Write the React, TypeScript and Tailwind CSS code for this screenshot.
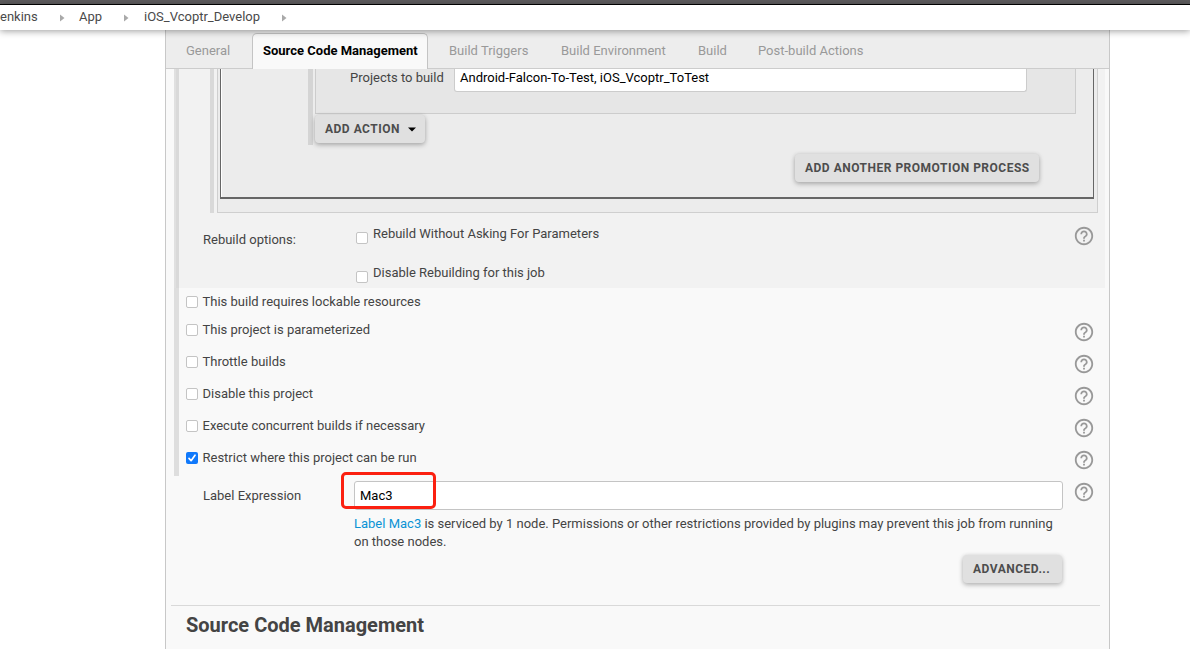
import type { ReactNode } from "react";
import { MdHelpOutline } from "react-icons/md";

function Help({ className = "" }: { className?: string }) {
  return <MdHelpOutline className={`size-[22px] shrink-0 text-[#999] ${className}`} />;
}

function Checkbox({ checked = false }: { checked?: boolean }) {
  return checked ? (
    <span className="flex size-3 shrink-0 items-center justify-center rounded-[2px] bg-[#1079fb]">
      <svg viewBox="0 0 12 12" className="size-3" fill="none" stroke="#fff" strokeWidth="1.7" strokeLinecap="round" strokeLinejoin="round">
        <path d="M3 6.4 5.1 8.7 9 3.2" />
      </svg>
    </span>
  ) : (
    <span className="size-3 shrink-0 rounded-[2px] border border-[#c4c4c4] bg-white" />
  );
}

function Button({ children, className }: { children: ReactNode; className: string }) {
  return (
    <button
      className={`flex h-7 shrink-0 items-center rounded-[4px] bg-[#e0e0e0] pl-[10px] text-[12px] font-bold tracking-[0.5px] whitespace-nowrap text-[#4d4d4d] shadow-[0_2px_5px_rgba(0,0,0,0.26),0_0_4px_rgba(0,0,0,0.08)] ${className}`}
    >
      {children}
    </button>
  );
}

function Crumb() {
  return (
    <svg viewBox="0 0 5 8" className="h-2 w-[5px] shrink-0" fill="#a9a9a9">
      <path d="M0 0.5 4.5 4 0 7.5z" />
    </svg>
  );
}

const options = [
  { label: "This project is parameterized" },
  { label: "Throttle builds" },
  { label: "Disable this project" },
  { label: "Execute concurrent builds if necessary" },
  { label: "Restrict where this project can be run", checked: true },
];

export default function App() {
  return (
    <div className="relative flex h-[649px] w-[1190px] flex-col overflow-hidden bg-white font-['Roboto',sans-serif] text-[13px] leading-[18px] whitespace-nowrap text-[#444]">
      <div className="h-[5px] shrink-0 border-b border-black bg-[#5d5b5d]" />
      <nav className="z-10 flex h-[25px] shrink-0 items-center bg-white text-[#4a4a4a] shadow-[0_1px_7px_rgba(0,0,0,0.4)]">
        <span className="w-[60px] pb-[2px]">enkins</span>
        <Crumb />
        <span className="ml-[14px] w-[45px] pb-[2px]">App</span>
        <Crumb />
        <span className="ml-[15px] w-[138px] pb-[2px]">iOS_Vcoptr_Develop</span>
        <Crumb />
      </nav>

      <main className="ml-[165px] flex w-[945px] grow flex-col border-x border-[#c8c8c8] bg-[#f9f9f9]">
        <div className="flex h-[39px] shrink-0 border-b border-[#ccc] bg-[#ededed] text-[#999]">
          <span className="w-[86px] pt-3 pl-5">General</span>
          <span className="mt-[3px] -mb-px h-[36px] w-[176px] rounded-t-[5px] border border-b-0 border-[#c4c4c4] bg-[#f9f9f9] pt-2 pl-[10px] font-bold text-black">
            Source Code Management
          </span>
          <span className="w-[111px] pt-3 pl-[21px]">Build Triggers</span>
          <span className="w-[137px] pt-3 pl-[22px]">Build Environment</span>
          <span className="w-[61px] pt-3 pl-[22px]">Build</span>
          <span className="pt-3 pl-[21px]">Post-build Actions</span>
        </div>

        <section className="ml-2 flex h-[219px] shrink-0">
          <div className="w-[5px] bg-[linear-gradient(to_right,#e0e0e0_40%,#d9d9d9_40%)]" />
          <div className="w-[926px] bg-[#f2f2f2]">
            <div className="flex h-[144px] pl-[31px]">
              <div className="w-[4px] bg-[#d9d9d9]" />
              <div className="ml-[3px] w-[881px] border-x border-b border-[#cfcfcf] bg-[#ececec] pl-[2px]">
                <div className="h-[130px] w-[874px] border-x border-b-2 border-[#666]">
                  <div className="flex h-[85px] border-l border-white pl-[86px]">
                    <div className="h-[76px] w-[5px] bg-[#d4d4d4]" />
                    <div className="ml-[2px]">
                      <div className="flex h-[45px] w-[761px] border-x border-b border-[#ccc] bg-[#e6e6e6]">
                        <span className="w-[138px] pl-[34px]">Projects to build</span>
                        <span className="h-[23px] w-[573px] rounded-b-[3px] border border-t-0 border-[#ccc] bg-white pl-[5px] text-black">
                          Android-Falcon-To-Test, iOS_Vcoptr_ToTest
                        </span>
                      </div>
                      <Button className="mt-px w-[110px]">
                        ADD ACTION
                        <svg viewBox="0 0 8 5" className="ml-2 h-[5px] w-2" fill="#000">
                          <path d="M0 .5h8L4 4.5z" />
                        </svg>
                      </Button>
                    </div>
                  </div>
                  <div className="flex h-[43px] justify-end border-l border-white pr-[54px]">
                    <Button className="w-[244px]">ADD ANOTHER PROMOTION PROCESS</Button>
                  </div>
                </div>
              </div>
            </div>
            <div className="flex h-[75px] pl-6">
              <span className="w-[153px] pt-[18px]">Rebuild options:</span>
              <div className="flex w-[717px] flex-col">
                <div className="flex h-[39px] pt-3">
                  <span className="mt-[7px] mr-[5px] flex"><Checkbox /></span>
                  Rebuild Without Asking For Parameters
                </div>
                <div className="flex h-[36px] pt-3">
                  <span className="mt-[7px] mr-[5px] flex"><Checkbox /></span>
                  Disable Rebuilding for this job
                </div>
              </div>
              <Help className="mt-3" />
            </div>
          </div>
        </section>

        <section className="ml-2 flex h-[188px] shrink-0">
          <div className="w-[5px] bg-[#dedede]" />
          <div className="w-[926px] pl-[7px]">
            <div className="flex h-[26px] items-center gap-[4.5px] pt-[2px]">
              <Checkbox />
              This build requires lockable resources
            </div>
            {options.map((o) => (
              <div key={o.label} className="flex h-8 items-center">
                <Checkbox checked={o.checked} />
                <span className="ml-[4.5px] w-[870.5px]">{o.label}</span>
                <Help className="mt-1" />
              </div>
            ))}
          </div>
        </section>

        <section className="flex h-[129px] shrink-0 pl-[37px]">
          <span className="w-[151px] pt-[11px]">Label Expression</span>
          <div className="w-[709px]">
            <div className="mt-[5px] h-[29px] rounded-[3px] border border-[#c4c4c4] bg-white pt-[5px] pl-[5px] text-black">Mac3</div>
            <p className="mt-[5px] whitespace-nowrap">
              <a className="text-[#0b93d5]">Label Mac3</a> is serviced by 1 node. Permissions or other restrictions provided by plugins may prevent this job from running
              <br />
              on those nodes.
            </p>
            <div className="mt-1 flex justify-end pr-px">
              <Button className="w-[99px]">ADVANCED...</Button>
            </div>
          </div>
          <Help className="mt-[5px] ml-[10px]" />
        </section>

        <section className="ml-[5px] w-[929px] border-t border-[#d9d9d9] pt-[6px] pl-[15px]">
          <h2 className="text-[20px] leading-[26px] font-bold">Source Code Management</h2>
        </section>
      </main>
      <div className="absolute top-[472px] left-[341px] h-[37px] w-[95px] rounded-[5px] border-[3px] border-[#fb2010]" />
    </div>
  );
}
